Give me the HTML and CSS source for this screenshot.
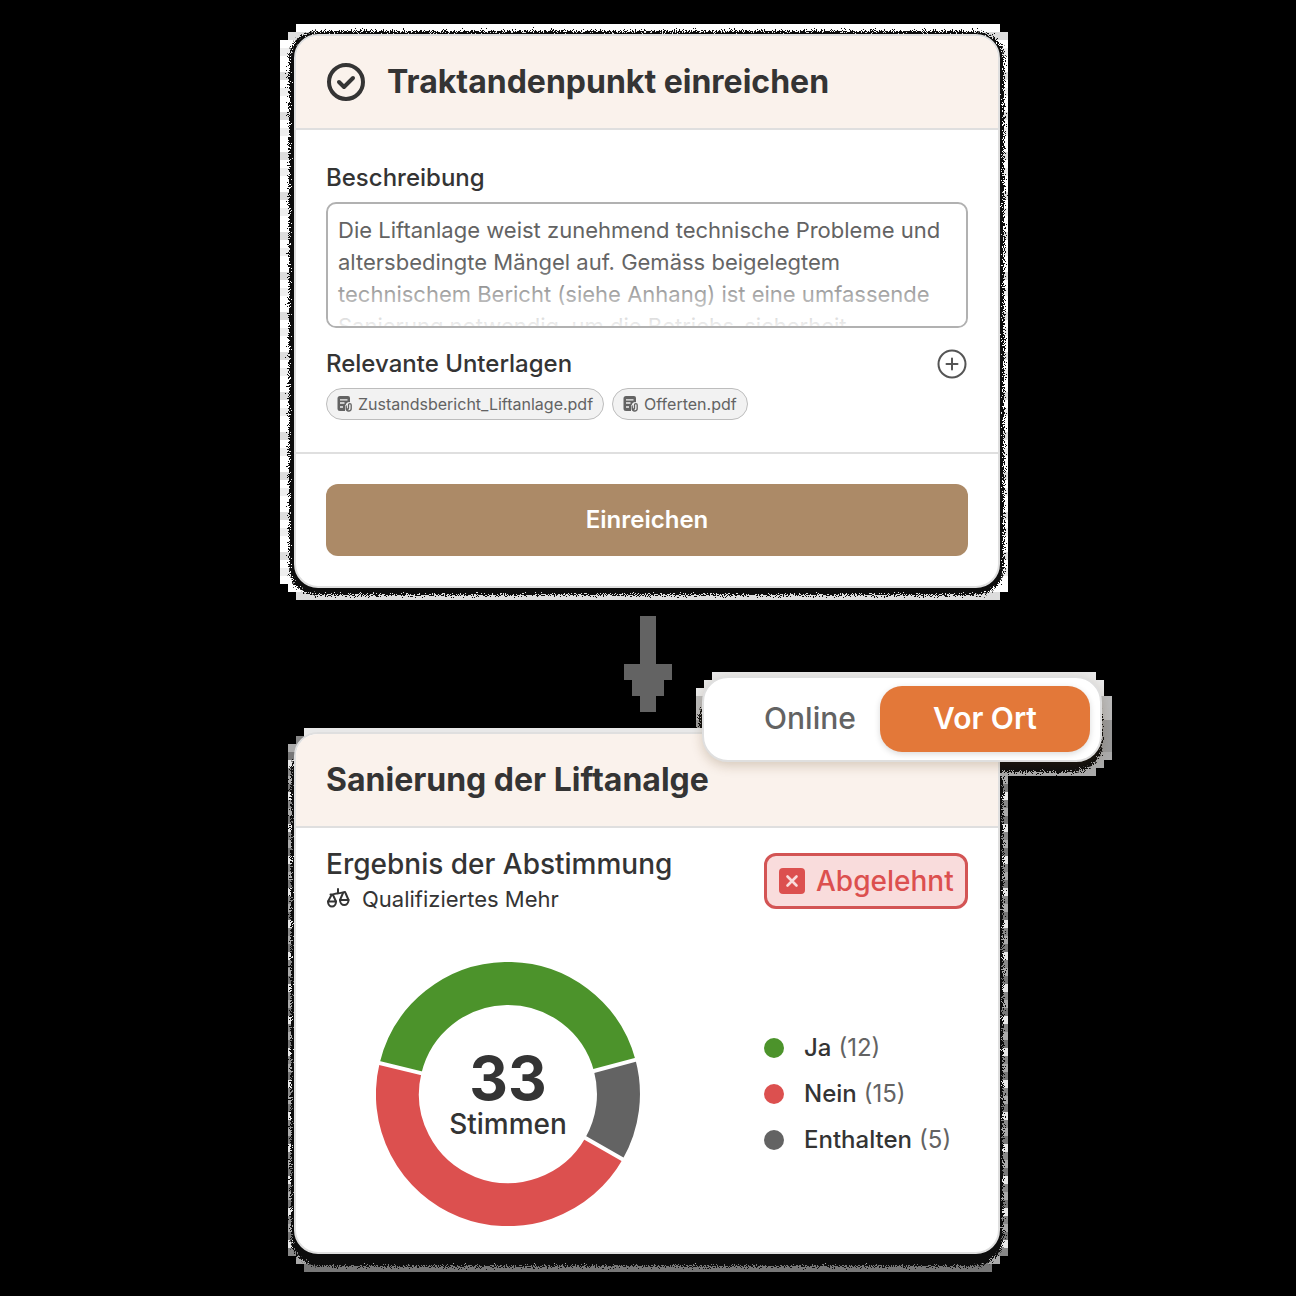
FILE: index.html
```
<!DOCTYPE html>
<html lang="de">
<head>
<meta charset="utf-8">
<meta name="viewport" content="width=device-width, initial-scale=1">
<title>Traktandenpunkt einreichen</title>
<link rel="stylesheet" href="styles.css">
</head>
<body>
<svg class="defs" width="0" height="0" aria-hidden="true">
  <filter id="grain" x="-5%" y="-5%" width="110%" height="110%">
    <feTurbulence type="fractalNoise" baseFrequency="0.9" numOctaves="2" result="noise"/>
    <feDisplacementMap in="SourceGraphic" in2="noise" scale="12" xChannelSelector="R" yChannelSelector="G"/>
  </filter>
  <symbol id="file" viewBox="0 0 16 16">
    <path fill="currentColor" d="M4 0h8a2 2 0 0 1 2 2v4.200a3 3 0 0 0-4 2.300l-1 1v5.500H4a2.500 2.500 0 0 1-2.500-2.500v-10A2.500 2.500 0 0 1 4 0z"/>
    <path stroke="#f2f2f2" stroke-width="1.300" d="M4 3.800h7.500M4 7h4.500M4 11h3"/>
    <path fill="none" stroke="currentColor" stroke-width="1.300" stroke-linecap="round" d="M12.500 9v3.500a.8.800 0 0 1-1.600 0M12.500 9a1.300 1.300 0 0 1 2.700 0v3.500a2.500 2.500 0 0 1-5 0V10"/>
  </symbol>
</svg>
<main class="flow">
  <section class="panel">
    <div class="halo halo-form" aria-hidden="true"></div>
    <form class="card">
      <header class="card-head">
        <svg class="check" viewBox="0 0 39 38" width="39" height="38" fill="none" stroke="currentColor" stroke-width="4" stroke-linecap="round" stroke-linejoin="round" aria-hidden="true"><circle cx="20" cy="19" r="17"/><path d="M13 19l5 5 9-9"/></svg>
        <h1>Traktandenpunkt einreichen</h1>
      </header>
      <div class="form-body">
        <label class="label" for="desc">Beschreibung</label>
        <div class="field"><textarea id="desc">Die Liftanlage weist zunehmend technische Probleme und altersbedingte Mängel auf. Gemäss beigelegtem technischem Bericht (siehe Anhang) ist eine umfassende Sanierung notwendig, um die Betriebs-sicherheit</textarea></div>
        <div class="docs-head">
          <h2 class="label">Relevante Unterlagen</h2>
          <button type="button" class="add" aria-label="Hinzufügen"><svg viewBox="0 0 32 32" width="32" height="32" fill="none" stroke="currentColor" stroke-width="2" stroke-linecap="round"><circle cx="16" cy="16" r="13.500"/><path d="M16 10.500v11M10.500 16h11"/></svg></button>
        </div>
        <div class="chips">
          <a class="chip" href="#"><svg width="16" height="16" aria-hidden="true"><use href="#file"/></svg>Zustandsbericht_Liftanlage.pdf</a>
          <a class="chip" href="#"><svg width="16" height="16" aria-hidden="true"><use href="#file"/></svg>Offerten.pdf</a>
        </div>
      </div>
      <footer class="card-foot"><button type="submit" class="submit">Einreichen</button></footer>
    </form>
  </section>

  <svg class="arrow" viewBox="0 0 48 96" width="48" height="96" aria-hidden="true"><path fill="#636363" d="M16 0h16v48h16v16h-8v16h-8v16H16V80H8V64H0V48h16z"/></svg>

  <section class="panel">
    <div class="halo halo-result" aria-hidden="true"></div>
    <article class="card">
      <header class="card-head"><h2>Sanierung der Liftanalge</h2></header>
      <div class="result-body">
        <div class="result-head">
          <div>
            <h3>Ergebnis der Abstimmung</h3>
            <p class="rule"><svg viewBox="0 0 24 22" width="24" height="22" fill="none" stroke="currentColor" stroke-width="2" stroke-linecap="round" stroke-linejoin="round" aria-hidden="true"><path d="M12 1v4.500M4.500 6.500C8 6.500 9 5.500 12 5.300S16 4.500 19 4"/><path d="M5.500 7L2 13.500h8L7 7M17 5l-3 7h8.500L19.500 5"/><path d="M2 13.500a4 5 0 0 0 8 0M14 12a4.200 5 0 0 0 8.500 0"/></svg>Qualifiziertes Mehr</p>
          </div>
          <div class="badge"><svg viewBox="0 0 28 28" width="28" height="28" aria-hidden="true"><rect x="1" y="1" width="26" height="26" rx="4" fill="#dc504f"/><path d="M9.500 9.500l9 9M18.500 9.500l-9 9" stroke="#f9dcdc" stroke-width="2.600" stroke-linecap="round"/></svg>Abgelehnt</div>
        </div>
        <div class="chart-row">
          <div class="donut">
            <svg viewBox="-132 -132 264 264" width="264" height="264" fill="none" stroke-width="43" aria-hidden="true">
              <path stroke="#4c932b" d="M-107.500 -25.800A110.500 110.500 0 0 1 106.700 -28.600"/>
              <path stroke="#636363" d="M106.700 -28.600A110.500 110.500 0 0 1 96 54.700"/>
              <path stroke="#dc504f" d="M96 54.700A110.500 110.500 0 0 1 -107.500 -25.800"/>
              <path stroke="#fff" stroke-width="4" d="M-83 -19.900L-132 -31.700M82 -22L131 -35.100M73 41.600L118 67.300"/>
            </svg>
            <div class="total"><strong>33</strong><span>Stimmen</span></div>
          </div>
          <ul class="legend">
            <li class="yes">Ja <span>(12)</span></li>
            <li class="no">Nein <span>(15)</span></li>
            <li class="abstain">Enthalten <span>(5)</span></li>
          </ul>
        </div>
      </div>
    </article>
    <div class="switch-wrap">
      <div class="halo halo-switch" aria-hidden="true"></div>
      <div class="switch">
        <button type="button">Online</button>
        <button type="button" class="active">Vor Ort</button>
      </div>
    </div>
  </section>
</main>
</body>
</html>
```
FILE: styles.css
```
* { box-sizing: border-box; }

body {
  margin: 0;
  padding: 34px 2px 42px 0;
  background: #000;
  color: #343434;
  font-family: Inter, "Liberation Sans", sans-serif;
}

h1, h2, h3, p, ul { margin: 0; padding: 0; }
button { border: 0; padding: 0 0 2px; font: inherit; cursor: pointer; }
.defs { position: absolute; }

.flow {
  max-width: 706px;
  margin: 0 auto;
  display: flex;
  flex-direction: column;
}

.arrow { align-self: center; margin: 28px 0 20px 2px; }

.panel { position: relative; isolation: isolate; }

.card {
  display: block;
  background: #fff;
  border: 2px solid #dfdfdf;
  border-radius: 24px;
  overflow: hidden;
}

.card-head {
  display: flex;
  align-items: center;
  gap: 22px;
  height: 94px;
  padding: 0 30px;
  background: #faf2ec;
  border-bottom: 2px solid #dfdfdf;
}
.card-head h1, .card-head h2 { font-size: 32px; line-height: 40px; font-weight: 700; }

/* Stepped, grainy edge around the floating surfaces */
.halo { position: absolute; z-index: -1; }
.halo::before {
  content: "";
  position: absolute;
  background: #111;
  border-radius: 28px;
  filter: url(#grain);
}
.halo-form {
  inset: -10px -8px -12px -14px;
  background: repeating-linear-gradient(#fff 0 8px, #ddd 8px 16px, #fff 16px 24px, #eee 24px 32px, #fff 32px 40px);
  clip-path: polygon(16px 0, calc(100% - 8px) 0, calc(100% - 8px) 8px, 100% 8px, 100% calc(100% - 8px), calc(100% - 8px) calc(100% - 8px), calc(100% - 8px) 100%, 16px 100%, 16px calc(100% - 8px), 8px calc(100% - 8px), 8px calc(100% - 16px), 0 calc(100% - 16px), 0 16px, 8px 16px, 8px 8px, 16px 8px);
}
.halo-form::before { inset: 7px 4px 5px 9px; }
.halo-result {
  inset: -4px -8px -18px -6px;
  background: repeating-linear-gradient(#e8e8e8 0 8px, #888 8px 16px, #aaa 16px 24px, #777 24px 32px);
  clip-path: polygon(16px 0, 100% 0, 100% calc(100% - 16px), calc(100% - 8px) calc(100% - 16px), calc(100% - 8px) calc(100% - 8px), calc(100% - 16px) calc(100% - 8px), calc(100% - 16px) 100%, 16px 100%, 16px calc(100% - 8px), 8px calc(100% - 8px), 8px calc(100% - 16px), 0 calc(100% - 16px), 0 16px, 8px 16px, 8px 8px, 16px 8px);
}
.halo-result::before { inset: 16px 5px 6px 3px; }
.halo-switch {
  inset: -4px -10px -14px -6px;
  background: linear-gradient(#e9e9e9 0 24px, #bbb 24px 48px, #999 48px 80px, #aaa 80px);
  clip-path: polygon(16px 0, 400px 0, 400px 8px, 408px 8px, 408px 24px, 100% 24px, 100% calc(100% - 16px), calc(100% - 8px) calc(100% - 16px), calc(100% - 8px) calc(100% - 8px), calc(100% - 16px) calc(100% - 8px), calc(100% - 16px) 100%, 304px 100%, 304px 56px, 0 56px, 0 16px, 8px 16px, 8px 8px, 16px 8px);
}
.halo-switch::before { inset: 20px 10px 4px 3px; }

/* Form card */
.form-body {
  display: flex;
  flex-direction: column;
  padding: 32px 30px;
}
.label { font-size: 24px; line-height: 32px; font-weight: 500; }

.field {
  position: relative;
  margin: 8px 0 20px;
  height: 126px;
  border: 2px solid #b1b1b1;
  border-radius: 10px;
  overflow: hidden;
}
.field textarea {
  display: block;
  width: 100%;
  height: 100%;
  padding: 10px 10px 0;
  border: 0;
  outline: 0;
  resize: none;
  overflow: hidden;
  background: none;
  color: #636363;
  font: 400 22px/32px Inter, "Liberation Sans", sans-serif;
}
.field::after {
  content: "";
  position: absolute;
  inset: 60px 0 0;
  background: linear-gradient(rgba(255, 255, 255, 0), rgba(255, 255, 255, .9));
  pointer-events: none;
}

.docs-head { display: flex; justify-content: space-between; }
.add { width: 32px; height: 32px; padding: 0; background: none; color: #555; }
.add svg { display: block; }

.chips { display: flex; gap: 8px; margin-top: 8px; }
.chip {
  display: flex;
  align-items: center;
  gap: 6px;
  height: 32px;
  padding: 0 10px 0 9px;
  border: 1px solid #bdbdbd;
  border-radius: 16px;
  background: #f2f2f2;
  color: #636363;
  font-size: 16px;
  text-decoration: none;
}

.card-foot { padding: 30px; border-top: 2px solid #dfdfdf; }
.submit {
  display: block;
  width: 100%;
  height: 72px;
  border-radius: 12px;
  background: #ac8a67;
  color: #fff;
  font-size: 24px;
  font-weight: 600;
}

/* Result card */
.result-body { padding: 18px 30px 26px; }
.result-head { display: flex; justify-content: space-between; align-items: center; }
.result-head h3 { font-size: 28px; line-height: 36px; font-weight: 500; }
.rule { display: flex; align-items: center; gap: 12px; font-size: 22px; line-height: 34px; }
.badge {
  display: flex;
  align-items: center;
  gap: 10px;
  width: 204px;
  height: 56px;
  padding-left: 11px;
  border: 3px solid #d35454;
  border-radius: 12px;
  background: #f9dcdc;
  color: #dc504f;
  font-size: 28px;
  font-weight: 500;
}

.chart-row {
  display: flex;
  justify-content: space-between;
  align-items: center;
  margin-top: 46px;
  padding-left: 50px;
}
.donut { display: grid; place-items: center; }
.donut > * { grid-area: 1 / 1; }
.total { display: flex; flex-direction: column; align-items: center; }
.total strong { font-size: 60px; line-height: 60px; font-weight: 700; }
.total span { font-size: 28px; line-height: 32px; font-weight: 500; }

.legend { width: 204px; list-style: none; }
.legend li {
  display: flex;
  align-items: center;
  gap: 7px;
  font-size: 24px;
  line-height: 46px;
  font-weight: 500;
}
.legend li::before {
  content: "";
  width: 20px;
  height: 20px;
  margin-right: 13px;
  border-radius: 50%;
  background: #636363;
}
.legend .yes::before { background: #4c932b; }
.legend .no::before { background: #dc504f; }
.legend span { color: #636363; font-weight: 400; }

/* Mode switch, floating over the corner of the result card */
.switch-wrap { position: absolute; top: -56px; right: -102px; width: 400px; isolation: isolate; }
.switch {
  display: flex;
  justify-content: flex-end;
  height: 86px;
  padding: 8px 10px;
  border: 2px solid #dfdfdf;
  border-radius: 26px;
  background: #fff;
  box-shadow: 0 4px 12px rgba(90, 60, 20, .22);
}
.switch button {
  width: 140px;
  border-radius: 22px;
  background: none;
  color: #636363;
  font-size: 30px;
  font-weight: 500;
}
.switch .active {
  width: 210px;
  background: #e37839;
  color: #fff;
  font-weight: 600;
  box-shadow: 0 2px 6px rgba(0, 0, 0, .15);
}
```
